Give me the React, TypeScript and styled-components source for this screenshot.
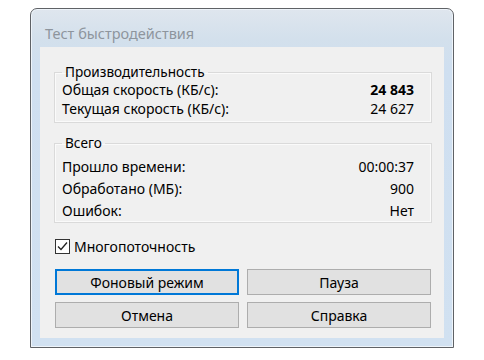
import styled, { createGlobalStyle } from "styled-components";

const GlobalStyle = createGlobalStyle`
  html, body {
    margin: 0;
    padding: 0;
    background: #ffffff;
  }
  body {
    font-family: "Noto Sans", "Open Sans", sans-serif;
    font-size: 14px;
    color: #000;
  }
  *, *::before, *::after {
    box-sizing: border-box;
  }
`;

type Row = { label: string; value: string; bold?: boolean };

const performance: Row[] = [
  { label: "Общая скорость (КБ/с):", value: "24 843", bold: true },
  { label: "Текущая скорость (КБ/с):", value: "24 627" },
];

const totals: Row[] = [
  { label: "Прошло времени:", value: "00:00:37" },
  { label: "Обработано (МБ):", value: "900" },
  { label: "Ошибок:", value: "Нет" },
];

const App = () => (
  <>
    <GlobalStyle />
    <Page>
      <Window>
        <TitleBar>Тест быстродействия</TitleBar>
        <Client>
          <Group $rowHeight={19} $top={0} $bottom={4}>
            <Legend>Производительность</Legend>
            {performance.map((r) => (
              <StatRow key={r.label}>
                <span>{r.label}</span>
                <Value $bold={r.bold}>{r.value}</Value>
              </StatRow>
            ))}
          </Group>
          <Group $rowHeight={22} $top={4} $bottom={1}>
            <Legend>Всего</Legend>
            {totals.map((r) => (
              <StatRow key={r.label}>
                <span>{r.label}</span>
                <Value>{r.value}</Value>
              </StatRow>
            ))}
          </Group>
          <CheckRow>
            <CheckBox>
              <svg width="13" height="13" viewBox="0 0 13 13">
                <path
                  d="M2 6.5 L5 9.5 L11 2.5"
                  fill="none"
                  stroke="#222"
                  strokeWidth="1.3"
                />
              </svg>
            </CheckBox>
            Многопоточность
          </CheckRow>
          <Buttons>
            <Button $primary>Фоновый режим</Button>
            <Button>Пауза</Button>
            <Button>Отмена</Button>
            <Button>Справка</Button>
          </Buttons>
        </Client>
      </Window>
    </Page>
  </>
);

export default App;

const Page = styled.div`
  padding: 8px 0 0 30px;
`;

const Window = styled.div`
  width: 424px;
  height: 340px;
  display: flex;
  flex-direction: column;
  border: 1px solid #5f6266;
  border-radius: 7px 7px 0 0;
  background: linear-gradient(
    to bottom,
    #dfe6ee 0px,
    #d3e0ec 30px,
    #cfdff0 60px,
    #d1e1f1 100%
  );
  box-shadow: inset 0 0 0 1px #eef4fa;
  padding: 0 9px 9px 9px;
`;

const TitleBar = styled.div`
  height: 38px;
  padding: 14px 0 0 5px;
  line-height: 20px;
  color: #8e959d;
  font-size: 14.5px;
`;

const Client = styled.div`
  flex: 1;
  background: #f0f0f0;
  padding: 17px 12px 9px 14px;
  display: flex;
  flex-direction: column;
`;

const Group = styled.fieldset<{ $rowHeight: number; $top: number; $bottom: number }>`
  margin: 0 0 12px 0;
  border: 1px solid #dadada;
  box-shadow: inset 0 0 0 1px #fafafa;
  padding: ${(p) => p.$top}px 17px ${(p) => p.$bottom}px 7px;
  min-width: 0;
  & > div {
    height: ${(p) => p.$rowHeight}px;
  }
`;

const Legend = styled.legend`
  padding: 0 3px;
  margin-left: 0;
  line-height: 16px;
  font-size: 13.6px;
`;

const StatRow = styled.div`
  display: flex;
  align-items: center;
  justify-content: space-between;
`;

const Value = styled.span<{ $bold?: boolean }>`
  font-weight: ${(p) => (p.$bold ? 700 : 400)};
`;

const CheckRow = styled.label`
  display: flex;
  align-items: center;
  gap: 4px;
  margin: 2px 0 0 1px;
  height: 18px;
`;

const CheckBox = styled.span`
  width: 15px;
  height: 15px;
  border: 1px solid #333;
  background: #fff;
  display: flex;
  align-items: center;
  justify-content: center;
`;

const Buttons = styled.div`
  margin-top: 14px;
  display: grid;
  grid-template-columns: 184px 184px;
  column-gap: 8px;
  row-gap: 7px;
  margin-left: 1px;
`;

const Button = styled.button<{ $primary?: boolean }>`
  height: 26px;
  font-family: inherit;
  font-size: 14px;
  color: #000;
  background: #e1e1e1;
  border: ${(p) => (p.$primary ? "2px solid #0078d7" : "1px solid #adadad")};
  padding: 0;
  cursor: pointer;
`;
